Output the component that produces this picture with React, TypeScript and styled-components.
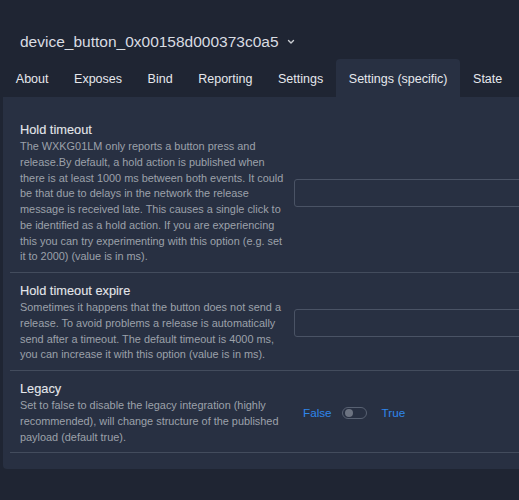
import React from 'react';
import styled, { createGlobalStyle } from 'styled-components';

const GlobalStyle = createGlobalStyle`
  html, body {
    margin: 0;
    padding: 0;
    background: #1f2533;
    overflow: hidden;
  }
  body {
    font-family: "Liberation Sans", Arial, sans-serif;
    -webkit-font-smoothing: antialiased;
  }
`;

const Page = styled.div`
  width: 620px;
  height: 500px;
  background: #1f2533;
`;

const Header = styled.div`
  display: flex;
  align-items: center;
  gap: 8px;
  padding: 24px 20px 0;
  height: 35px;
`;

const DeviceName = styled.span`
  color: #d9dce2;
  font-size: 15.5px;
  line-height: 20px;
`;

const Tabs = styled.nav`
  display: flex;
  margin-left: 3px;
  height: 38px;
`;

const Tab = styled.div<{ $active?: boolean }>`
  display: flex;
  align-items: center;
  padding: 1px 12.8px 0;
  font-size: 12.5px;
  color: #e6e8ed;
  background: ${(p) => (p.$active ? '#283042' : 'transparent')};
  border-radius: 4px 4px 0 0;
  white-space: nowrap;
`;

const Card = styled.div`
  margin-left: 3px;
  background: #283042;
  border-radius: 0 0 4px 4px;
  padding: 15px 0 16px;
`;

const Item = styled.div`
  display: flex;
  align-items: center;
  margin-left: 7px;
  padding: 9px 0 7px 10px;
  border-bottom: 1px solid #434c5d;
`;

const Info = styled.div`
  width: 264px;
  flex-shrink: 0;
`;

const Title = styled.div`
  color: #e4e6ea;
  font-size: 12.8px;
  line-height: 18px;
  -webkit-text-stroke: 0.1px #e4e6ea;
`;

const Desc = styled.div`
  color: #9ca1aa;
  font-size: 10.9px;
  line-height: 15.75px;
`;

const Control = styled.div`
  flex: 1;
  padding-left: 10px;
  display: flex;
  align-items: center;
`;

const Input = styled.div`
  width: 100%;
  height: 28px;
  box-sizing: border-box;
  border: 1px solid #4a5365;
  border-radius: 3px;
  background: #283042;
`;

const Switch = styled.div`
  display: flex;
  align-items: center;
  gap: 10px;
  padding-left: 9px;
`;

const SwitchLabel = styled.span`
  color: #2f86eb;
  font-size: 11.7px;
`;

const Track = styled.span`
  width: 25px;
  height: 12px;
  box-sizing: border-box;
  border: 1px solid #586172;
  border-radius: 7px;
  display: flex;
  align-items: center;
  padding-left: 2px;
  margin-right: 5px;
`;

const Knob = styled.span`
  width: 8px;
  height: 8px;
  border-radius: 50%;
  background: #6c7381;
`;

const Chevron = () => (
  <svg width="8" height="6" viewBox="0 0 8 6" fill="none">
    <path d="M1.5 1.5 L4 4 L6.5 1.5" stroke="#c9ccd2" strokeWidth="1.4" strokeLinecap="round" strokeLinejoin="round" />
  </svg>
);

const tabs = ['About', 'Exposes', 'Bind', 'Reporting', 'Settings', 'Settings (specific)', 'State'];

export default function App() {
  return (
    <Page>
      <GlobalStyle />
      <Header>
        <DeviceName>device_button_0x00158d000373c0a5</DeviceName>
        <Chevron />
      </Header>
      <Tabs>
        {tabs.map((t) => (
          <Tab key={t} $active={t === 'Settings (specific)'}>
            {t}
          </Tab>
        ))}
      </Tabs>
      <Card>
        <Item>
          <Info>
            <Title>Hold timeout</Title>
            <Desc>
              The WXKG01LM only reports a button press and release.By default, a hold action is published
              when there is at least 1000 ms between both events. It could be that due to delays in the
              network the release message is received late. This causes a single click to be identified as
              a hold action. If you are experiencing this you can try experimenting with this option (e.g.
              set it to 2000) (value is in ms).
            </Desc>
          </Info>
          <Control>
            <Input />
          </Control>
        </Item>
        <Item>
          <Info>
            <Title>Hold timeout expire</Title>
            <Desc>
              Sometimes it happens that the button does not send a release. To avoid problems a release is
              automatically send after a timeout. The default timeout is 4000 ms, you can increase it with
              this option (value is in ms).
            </Desc>
          </Info>
          <Control>
            <Input />
          </Control>
        </Item>
        <Item>
          <Info>
            <Title>Legacy</Title>
            <Desc>
              Set to false to disable the legacy integration (highly recommended), will change structure of
              the published payload (default true).
            </Desc>
          </Info>
          <Control>
            <Switch>
              <SwitchLabel>False</SwitchLabel>
              <Track>
                <Knob />
              </Track>
              <SwitchLabel>True</SwitchLabel>
            </Switch>
          </Control>
        </Item>
      </Card>
    </Page>
  );
}
